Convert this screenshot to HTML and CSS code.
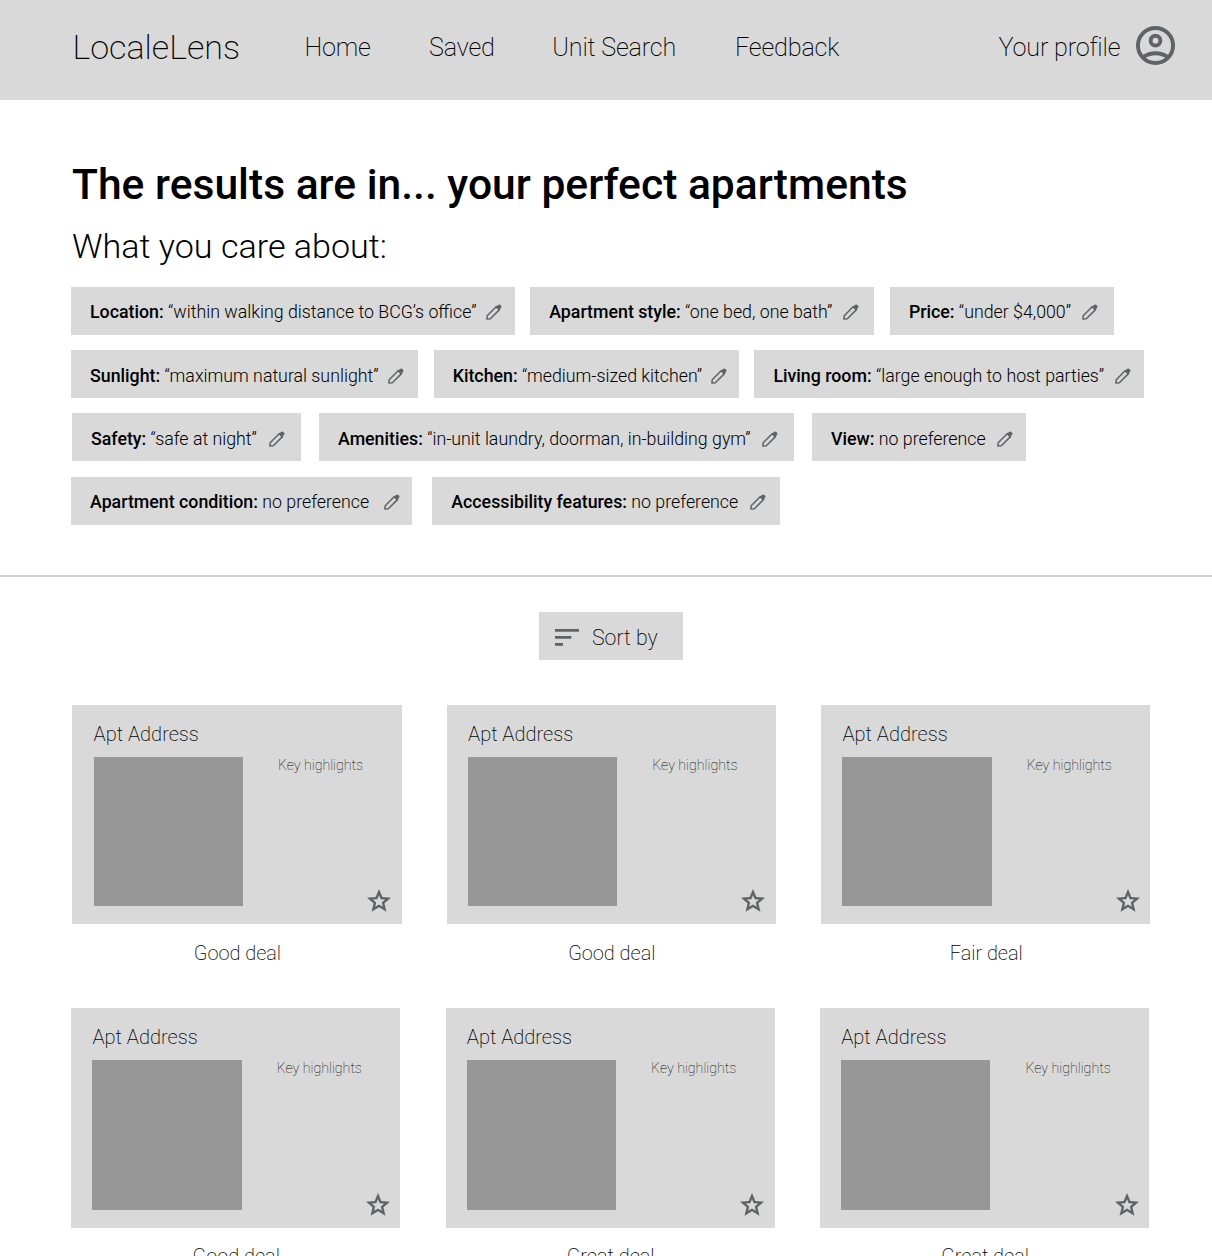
FILE: index.html
```html
<!DOCTYPE html>
<html lang="en">
<head>
<meta charset="utf-8">
<title>LocaleLens</title>
<link rel="stylesheet" href="styles.css">
</head>
<body>
<svg class="defs" aria-hidden="true">
  <symbol id="pencil" viewBox="0 0 16 16"><path d="M.9 15.1 1.2 11.7 10.4 2.5 13.5 5.6 4.3 14.8Z" fill="none" stroke="currentColor" stroke-width="1.5" stroke-linejoin="round"/><path d="M9.6 3.2 12 .9Q13.4-.2 14.7 1.2 16.100 2.600 15 4L12.800 6.300Z" fill="currentColor"/></symbol>
  <symbol id="star" viewBox="2 2 20 20"><path d="m8.850 16.825 3.150-1.900 3.150 1.925-.825-3.600 2.775-2.400-3.650-.325-1.450-3.400-1.450 3.375-3.650.325 2.775 2.425ZM5.825 21l1.625-7.025L2 9.250l7.200-.625L12 2l2.800 6.625 7.200.625-5.450 4.725L18.175 21 12 17.275Z" fill="currentColor"/></symbol>
</svg>
<header class="topbar">
  <div class="brand">LocaleLens</div>
  <nav class="nav">
    <a class="nav-home">Home</a>
    <a class="nav-saved">Saved</a>
    <a class="nav-search">Unit Search</a>
    <a class="nav-feedback">Feedback</a>
  </nav>
  <div class="profile">
    <span>Your profile</span>
    <svg class="avatar" viewBox="2 2 20 20"><g fill="none" stroke="currentColor" stroke-width="2"><circle cx="12" cy="12" r="9"/><circle cx="12" cy="9.500" r="2.500"/><path d="M5.500 18Q8.500 16 12 16T18.500 18"/></g></svg>
  </div>
</header>
<main>
  <section class="summary">
    <h1>The results are in... your perfect apartments</h1>
    <h2>What you care about:</h2>
    <div class="row">
      <div class="chip location"><span><b>Location:</b> “within walking distance to BCG’s office”</span><svg><use href="#pencil"/></svg></div>
      <div class="chip style"><span><b>Apartment style:</b> “one bed, one bath”</span><svg><use href="#pencil"/></svg></div>
      <div class="chip price"><span><b>Price:</b> “under $4,000”</span><svg><use href="#pencil"/></svg></div>
    </div>
    <div class="row">
      <div class="chip sunlight"><span><b>Sunlight:</b> “maximum natural sunlight”</span><svg><use href="#pencil"/></svg></div>
      <div class="chip kitchen"><span><b>Kitchen:</b> “medium-sized kitchen”</span><svg><use href="#pencil"/></svg></div>
      <div class="chip living"><span><b>Living room:</b> “large enough to host parties”</span><svg><use href="#pencil"/></svg></div>
    </div>
    <div class="row row-wide">
      <div class="chip safety"><span><b>Safety:</b> “safe at night”</span><svg><use href="#pencil"/></svg></div>
      <div class="chip amenities"><span><b>Amenities:</b> “in-unit laundry, doorman, in-building gym”</span><svg><use href="#pencil"/></svg></div>
      <div class="chip view"><span><b>View:</b> no preference</span><svg><use href="#pencil"/></svg></div>
    </div>
    <div class="row row-last">
      <div class="chip condition"><span><b>Apartment condition:</b> no preference</span><svg><use href="#pencil"/></svg></div>
      <div class="chip access"><span><b>Accessibility features:</b> no preference</span><svg><use href="#pencil"/></svg></div>
    </div>
  </section>
  <section class="results">
    <button class="sort"><svg viewBox="0 0 24 17"><path d="M0 0H24V2.800H0ZM0 7H16.300V9.800H0ZM0 14H8V16.800H0Z" fill="currentColor"/></svg>Sort by</button>
    <div class="grid">
      <article><div class="card"><h3>Apt Address</h3><div class="photo"></div><p>Key highlights</p><svg><use href="#star"/></svg></div><div class="deal">Good deal</div></article>
      <article><div class="card"><h3>Apt Address</h3><div class="photo"></div><p>Key highlights</p><svg><use href="#star"/></svg></div><div class="deal">Good deal</div></article>
      <article><div class="card"><h3>Apt Address</h3><div class="photo"></div><p>Key highlights</p><svg><use href="#star"/></svg></div><div class="deal">Fair deal</div></article>
    </div>
    <div class="grid grid-second">
      <article><div class="card"><h3>Apt Address</h3><div class="photo"></div><p>Key highlights</p><svg><use href="#star"/></svg></div><div class="deal">Good deal</div></article>
      <article><div class="card"><h3>Apt Address</h3><div class="photo"></div><p>Key highlights</p><svg><use href="#star"/></svg></div><div class="deal">Great deal</div></article>
      <article><div class="card"><h3>Apt Address</h3><div class="photo"></div><p>Key highlights</p><svg><use href="#star"/></svg></div><div class="deal">Great deal</div></article>
    </div>
  </section>
</main>
</body>
</html>
```
FILE: styles.css
```css
* { box-sizing: border-box; margin: 0; padding: 0; }
html, body { height: 1256px; overflow: hidden; }
body { background: #fff; color: #000; font-family: Roboto, sans-serif; font-weight: 300; white-space: nowrap; }
.defs { display: none; }

.topbar { display: flex; align-items: center; height: 99.500px; padding: 0 37.400px 5px 72.500px; background: #d9d9d9; font-weight: 220; }
.brand { width: 232px; font-size: 34.080px; }
.nav, .profile { font-size: 25.200px; letter-spacing: -.2px; }
.nav { display: flex; }
.nav-home { width: 124.500px; }
.nav-saved { width: 123.300px; }
.nav-search { width: 182.700px; }
.profile { display: flex; align-items: center; gap: 15.300px; margin-left: auto; }
.avatar { width: 39px; height: 39px; margin-top: -3px; color: #5f6368; }

.summary { height: 477px; padding: 57px 0 0 71px; border-bottom: 2.500px solid #cfcfcf; }
h1 { padding-left: 1px; font-size: 42.600px; font-weight: 500; line-height: 54px; }
h2 { padding-left: 1px; margin: 12px 0 18.300px; font-size: 34.080px; font-weight: 300; line-height: 46px; }
.row { display: flex; gap: 15.700px; margin-bottom: 15.300px; }
.row-wide { gap: 18px; padding-left: 1px; }
.row-last { gap: 20px; }
.chip { display: flex; align-items: center; justify-content: space-between; height: 48px; padding: 3px 14px 0 19px; background: #d9d9d9; font-size: 17.780px; }
.chip b { font-weight: 500; }
.chip svg { width: 16px; height: 16px; color: #5f6368; }
.location { width: 443.500px; padding-right: 12.500px; }
.style { width: 344px; padding-right: 15.500px; }
.price { width: 224px; padding-right: 16px; }
.sunlight { width: 347px; }
.kitchen { width: 305px; padding-right: 12px; }
.living { width: 389.500px; padding-right: 13px; }
.safety { width: 229px; padding-right: 16.500px; }
.amenities { width: 475px; padding-right: 16px; }
.view { width: 214px; padding-right: 13px; }
.condition { width: 341.300px; padding-right: 12.500px; }
.access { width: 347.500px; }

.results { padding: 35.500px 0 0 72.300px; }
.sort { display: flex; align-items: center; gap: 13px; width: 144px; height: 48px; margin-left: 467.100px; padding: 2px 0 0 15.600px; border: 0; background: #d9d9d9; font: 220 21.300px Roboto, sans-serif; color: #000; }
.sort svg { width: 24px; height: 17px; color: #5f6368; }
.grid { display: grid; grid-template-columns: repeat(3, 329.300px); column-gap: 45.100px; margin-top: 45px; }
.grid-second { margin: 41.800px 0 0 -1.200px; }
.card { display: grid; grid-template-columns: 149.300px 1fr auto; grid-template-rows: 51.700px 149.600px; height: 219.300px; padding: 0 10.700px 0 21.300px; background: #d9d9d9; }
h3 { grid-column: 1 / -1; padding-top: 15.500px; font-size: 20px; font-weight: 220; line-height: 26px; }
.photo { background: #979797; }
.card p { padding-left: 35px; font-size: 14.200px; line-height: 17px; font-weight: 100; }
.card svg { align-self: end; width: 24px; height: 24px; margin-bottom: -7px; color: #5f6368; }
.deal { margin-top: 15.400px; padding-left: 1px; font-size: 19.900px; font-weight: 220; line-height: 27px; text-align: center; }
```
